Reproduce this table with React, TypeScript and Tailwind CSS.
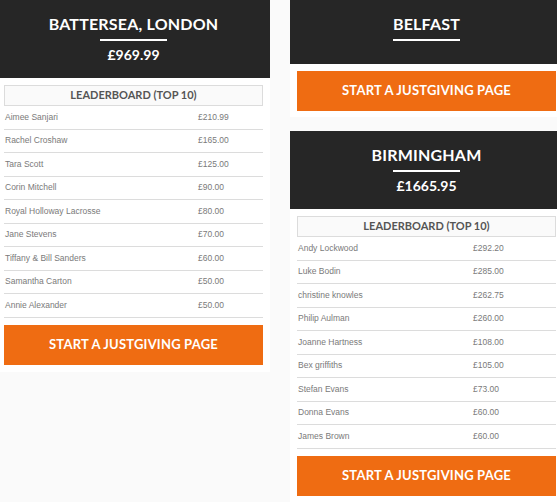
import React from "react";

type Row = [string, string];

const battersea: Row[] = [
  ["Aimee Sanjari", "£210.99"],
  ["Rachel Croshaw", "£165.00"],
  ["Tara Scott", "£125.00"],
  ["Corin Mitchell", "£90.00"],
  ["Royal Holloway Lacrosse", "£80.00"],
  ["Jane Stevens", "£70.00"],
  ["Tiffany & Bill Sanders", "£60.00"],
  ["Samantha Carton", "£50.00"],
  ["Annie Alexander", "£50.00"],
];

const birmingham: Row[] = [
  ["Andy Lockwood", "£292.20"],
  ["Luke Bodin", "£285.00"],
  ["christine knowles", "£262.75"],
  ["Philip Aulman", "£260.00"],
  ["Joanne Hartness", "£108.00"],
  ["Bex griffiths", "£105.00"],
  ["Stefan Evans", "£73.00"],
  ["Donna Evans", "£60.00"],
  ["James Brown", "£60.00"],
];

const heading = { fontFamily: "Lato, 'Open Sans', sans-serif" };
const body = { fontFamily: "'Liberation Sans', Arial, sans-serif" };

function Header({ title, price }: { title: string; price?: string }) {
  return (
    <div
      className={`bg-[#262626] text-white text-center pt-[14px] ${price ? "pb-[13px]" : "pb-[23px]"}`}
      style={heading}
    >
      <div className="text-[16px] font-bold leading-[20px] tracking-[0.2px]">{title}</div>
      <div className="mx-auto mt-[5px] h-[2px] w-[67px] bg-white" />
      {price && <div className="mt-[4px] text-[14px] font-bold leading-[20px]">{price}</div>}
    </div>
  );
}

function Button() {
  return (
    <div
      className="h-[40px] bg-[#ef6c12] text-white flex items-center justify-center text-[13px] font-bold tracking-[0.2px]"
      style={heading}
    >
      START A JUSTGIVING PAGE
    </div>
  );
}

function Leaderboard({ rows, amountCol }: { rows: Row[]; amountCol: "left" | "right" }) {
  return (
    <div className="mt-[7px]">
      <div
        className="h-[21px] border border-[#dcdcdc] bg-[#fafafa] flex items-center justify-center text-[11px] font-bold text-[#555555]"
        style={heading}
      >
        LEADERBOARD (TOP 10)
      </div>
      {rows.map(([name, amt], i) => (
        <div
          key={i}
          className={`h-[23.5px] border-b border-[#dcdcdc] grid items-center text-[8.5px] text-[#7a7a7a] ${
            amountCol === "left" ? "grid-cols-[194px_1fr]" : "grid-cols-[176px_1fr]"
          }`}
          style={body}
        >
          <span className="pl-[1px]">{name}</span>
          <span>{amt}</span>
        </div>
      ))}
    </div>
  );
}

export default function App() {
  return (
    <div className="min-h-[502px] w-[557px] overflow-hidden bg-[#fafafa]">
      <div className="-ml-[3px] flex items-start gap-[20px]">
        <div className="w-[273px] shrink-0 bg-white">
          <Header title="BATTERSEA, LONDON" price="£969.99" />
          <div className="px-[7px] pb-[7px]">
            <Leaderboard rows={battersea} amountCol="left" />
            <div className="mt-[7px]">
              <Button />
            </div>
          </div>
        </div>
        <div className="w-[273px] shrink-0 flex flex-col gap-[14px]">
          <div className="bg-white">
            <Header title="BELFAST" />
            <div className="p-[7px] pb-[6px]">
              <Button />
            </div>
          </div>
          <div className="bg-white">
            <Header title="BIRMINGHAM" price="£1665.95" />
            <div className="px-[7px] pb-[7px]">
              <Leaderboard rows={birmingham} amountCol="right" />
              <div className="mt-[7px]">
                <Button />
              </div>
            </div>
          </div>
        </div>
      </div>
    </div>
  );
}
